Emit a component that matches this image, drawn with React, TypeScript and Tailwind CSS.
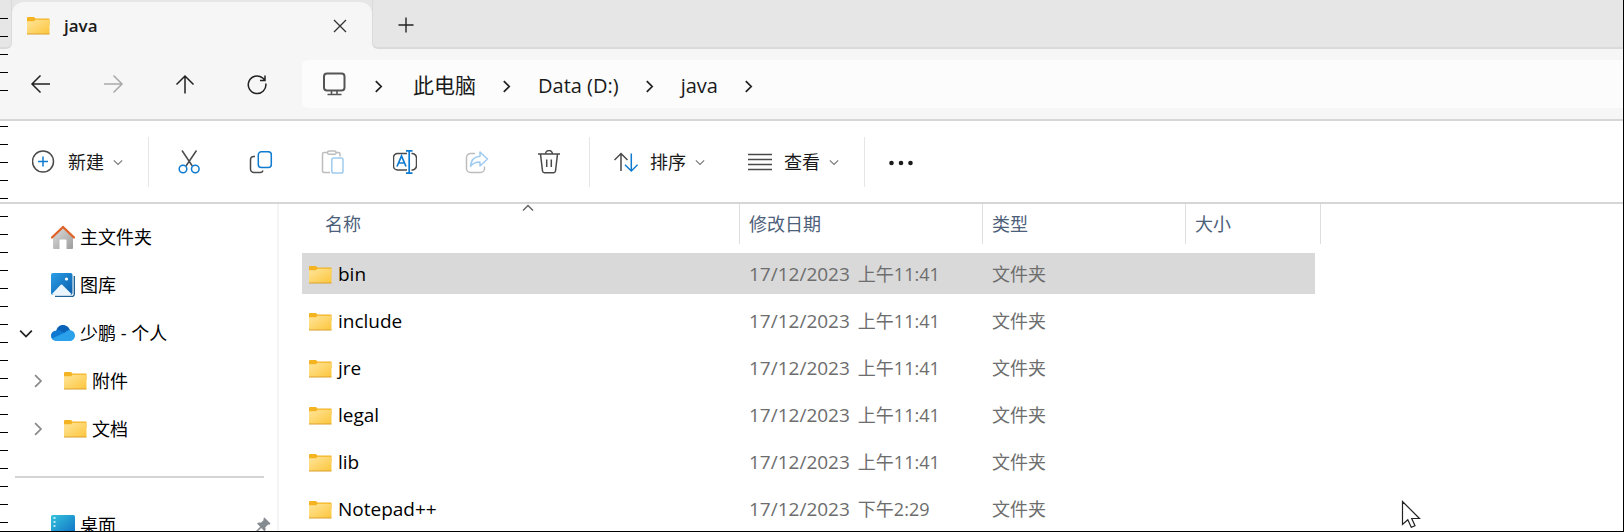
import type { ReactNode } from 'react';

type FileRow = {
  name: string;
  date: string;
  time: string;
  kind: string;
};

const files: FileRow[] = [
  { name: 'bin', date: '17/12/2023', time: '上午11:41', kind: '文件夹' },
  { name: 'include', date: '17/12/2023', time: '上午11:41', kind: '文件夹' },
  { name: 'jre', date: '17/12/2023', time: '上午11:41', kind: '文件夹' },
  { name: 'legal', date: '17/12/2023', time: '上午11:41', kind: '文件夹' },
  { name: 'lib', date: '17/12/2023', time: '上午11:41', kind: '文件夹' },
  { name: 'Notepad++', date: '17/12/2023', time: '下午2:29', kind: '文件夹' },
];

const crumbs = [
  { label: '此电脑', cjk: true },
  { label: 'Data (D:)' },
  { label: 'java' },
];

function FolderIcon() {
  return (
    <svg className="h-[18px] w-6 shrink-0" viewBox="0 0 24 18" aria-hidden="true">
      <defs>
        <linearGradient id="folder" x1="0" y1="0" x2="1" y2="1">
          <stop offset="0" stopColor="#ffe59b" />
          <stop offset="1" stopColor="#fcc63c" />
        </linearGradient>
      </defs>
      <path d="M1 1a1 1 0 0 1 1-1h6l1.500 1.500H23a.5.5 0 0 1 .5.500V8H1z" fill="#f4b320" />
      <path d="M1 4.300h7l1.500-1.500H23.500V17H1z" fill="url(#folder)" />
      <path d="M1 17h22.500" stroke="#dba02c" strokeWidth="1" />
    </svg>
  );
}

function Chevron({ dir, className, stroke = 1.5 }: { dir: 'up' | 'down' | 'right'; className: string; stroke?: number }) {
  const d = { up: 'M1 6.500l5-5 5 5', down: 'M1 4l5 5 5-5', right: 'M3.500 1l5 5-5 5' }[dir];
  return (
    <svg className={className} viewBox="0 0 12 12" fill="none" stroke="currentColor" strokeWidth={stroke} aria-hidden="true">
      <path d={d} />
    </svg>
  );
}

function LineIcon({ children }: { children: ReactNode }) {
  return (
    <svg className="size-6 shrink-0" viewBox="0 0 24 24" fill="none" stroke="#4a4a4a" strokeWidth="1.5" aria-hidden="true">
      {children}
    </svg>
  );
}

function IconButton({ label, disabled = false, children }: { label: string; disabled?: boolean; children: ReactNode }) {
  return (
    <button type="button" aria-label={label} disabled={disabled} className="flex h-12 w-12 items-center justify-center">
      <LineIcon>{children}</LineIcon>
    </button>
  );
}

function MenuButton({ label, icon }: { label: string; icon: ReactNode }) {
  return (
    <button type="button" className="flex h-12 shrink-0 items-center text-[18px] text-[#1a1a1a]">
      <LineIcon>{icon}</LineIcon>
      <span className="ml-3 pt-0.5">{label}</span>
      <Chevron dir="down" className="ml-[9px] size-[10px] text-[#777]" stroke={1.3} />
    </button>
  );
}

function HomeIcon() {
  return (
    <svg className="size-6 shrink-0" viewBox="0 0 24 24" aria-hidden="true">
      <defs>
        <linearGradient id="wall" x1="0" y1="0" x2="1" y2="1">
          <stop offset="0" stopColor="#dedede" />
          <stop offset="1" stopColor="#9d9d9d" />
        </linearGradient>
      </defs>
      <path d="M2 11L12 2l10 9v12a1 1 0 0 1-1 1h-5.500v-8.500a1 1 0 0 0-1-1h-5a1 1 0 0 0-1 1V24H3a1 1 0 0 1-1-1z" fill="url(#wall)" />
      <path d="M1 12.500L12 2l11 10.500" fill="none" stroke="#e0632a" strokeWidth="2.400" strokeLinecap="round" strokeLinejoin="round" />
    </svg>
  );
}

function GalleryIcon() {
  return (
    <svg className="size-6 shrink-0" viewBox="0 0 24 24" aria-hidden="true">
      <defs>
        <linearGradient id="photo" x1="0" y1="0" x2="1" y2="1">
          <stop offset="0" stopColor="#2a9fe6" />
          <stop offset="1" stopColor="#0a5cab" />
        </linearGradient>
      </defs>
      <path d="M23.300 3v18a2.500 2.500 0 0 1-2.500 2.500H4" fill="none" stroke="#1f6394" strokeWidth="1.400" />
      <rect x="0" y="0" width="21.500" height="22" rx="2" fill="url(#photo)" />
      <path d="M1 21l8-8.600a2 2 0 0 1 3 0L20.500 21q-.5 1-2 1H3q-1.500 0-2-1z" fill="#eaf5fd" />
      <circle cx="15.500" cy="6" r="1.600" fill="#fff" />
    </svg>
  );
}

function CloudIcon() {
  return (
    <svg className="size-6 shrink-0" viewBox="0 0 24 24" aria-hidden="true">
      <path d="M5 11C6 5.500 9 4 12 4c3.500 0 6 2.300 7 5.500l-6 6z" fill="#0a63b8" />
      <path d="M5.500 9.500c2-.6 4 0 5.500 1l8 5-13 4C2.500 20 0 17.800 0 14.800c0-2.900 2.300-5.200 5.500-5.300z" fill="#0f78d0" />
      <path d="M14 11.500c1.500-1.700 3-2.300 4.800-2.300 3 0 5.200 2.300 5.200 5.200 0 3-2.300 5.600-5.500 5.600H6c-2 0-4-1-5-2.500z" fill="#2aa1ea" />
    </svg>
  );
}

function DesktopIcon() {
  return (
    <svg className="size-6 shrink-0" viewBox="0 0 24 24" aria-hidden="true">
      <defs>
        <linearGradient id="desk" x1="0" y1="0" x2="1" y2="1">
          <stop offset="0" stopColor="#35c3dc" />
          <stop offset="1" stopColor="#0f6fc4" />
        </linearGradient>
      </defs>
      <rect x="0" y="2" width="24" height="20" rx="1.500" fill="url(#desk)" />
      <path d="M2.500 5h2M2.500 9h2M2.500 13h2" stroke="#e5fbff" strokeWidth="1.600" />
    </svg>
  );
}

function PinIcon() {
  return (
    <svg className="h-4 w-4 shrink-0" viewBox="0 0 16 16" fill="#858b91" aria-hidden="true">
      <path d="M9.500 0.500l6 6-1.200 1.300-1.200-.3-2.800 2.800c.6 1.700.3 3-.8 4l-3.300-3.300L2 15.200.8 15.500 1 14l4.200-4.300L2 6.500c1-1 2.400-1.300 4-.8l2.700-2.800-.4-1.200z" />
    </svg>
  );
}

type NavItemProps = {
  label: string;
  icon: ReactNode;
  state?: 'open' | 'closed';
  nested?: boolean;
  pinned?: boolean;
};

function NavItem({ label, icon, state, nested = false, pinned = false }: NavItemProps) {
  return (
    <li>
      <button type="button" className={`flex h-12 w-full items-center pr-[6px] text-left ${nested ? 'pl-[30px]' : 'pl-[18px]'}`}>
        <span className="flex w-4 justify-center">
          {state === 'open' && <Chevron dir="down" className="size-[14px] text-[#222]" />}
          {state === 'closed' && <Chevron dir="right" className="size-[14px] text-[#888]" />}
        </span>
        <span className="ml-[17px]">{icon}</span>
        <span className="ml-[5px]">{label}</span>
        {pinned && <span className="ml-auto"><PinIcon /></span>}
      </button>
    </li>
  );
}

function TabStrip() {
  return (
    <div className="flex h-[49px] bg-[#f6f6f6]">
      <div className="w-3 rounded-br-md border-r border-b-2 border-[#dadada] bg-[#e6e6e6]" />
      <div className="w-[360px] bg-[#e6e6e6] pt-[2px]">
        <div className="flex h-full items-center rounded-t-xl bg-[#f6f6f6] pr-[22px] pl-[14px]">
          <FolderIcon />
          <span className="ml-[14px] text-[17px] font-semibold text-[#1a1a1a]">java</span>
          <button type="button" aria-label="关闭" className="ml-auto flex size-5 items-center justify-center">
            <svg className="size-[14px]" viewBox="0 0 14 14" stroke="#333" strokeWidth="1.300" aria-hidden="true">
              <path d="M1 1l12 12M13 1L1 13" />
            </svg>
          </button>
        </div>
      </div>
      <div className="flex flex-1 items-center rounded-bl-md border-b-2 border-l border-[#dadada] bg-[#e6e6e6] pt-0.5 pl-[23px]">
        <button type="button" aria-label="新标签页" className="flex size-5 items-center justify-center">
          <svg className="size-4" viewBox="0 0 16 16" stroke="#222" strokeWidth="1.400" aria-hidden="true">
            <path d="M8 0.500v15M0.500 8h15" />
          </svg>
        </button>
      </div>
    </div>
  );
}

function AddressBar() {
  return (
    <div className="flex h-[72px] items-center border-b-2 border-[#d6d6d6] bg-[#f6f6f6] pl-[17px]">
      <div className="flex gap-6">
        <IconButton label="后退">
          <path d="M21 12H3M11.500 3.500L3 12l8.500 8.500" stroke="#222" />
        </IconButton>
        <IconButton label="前进" disabled>
          <path d="M3 12h18M12.500 3.500L21 12l-8.500 8.500" stroke="#a9a9a9" />
        </IconButton>
        <IconButton label="上移">
          <path d="M12 21.500V4M3.500 12.500L12 4l8.500 8.500" stroke="#222" />
        </IconButton>
        <IconButton label="刷新">
          <path d="M20.800 11.500A8.800 8.800 0 1 1 17.500 5.800l2.500 2.400M20 3.500V8.500H15" stroke="#222" />
        </IconButton>
      </div>
      <nav aria-label="地址" className="ml-[21px] flex h-12 flex-1 items-center rounded-l-md bg-[#fcfcfc] pl-5 text-[20px] text-[#1a1a1a]">
        <LineIcon>
          <rect x="2" y="1.500" width="20.500" height="17" rx="3" stroke="#555" strokeWidth="2" />
          <path d="M9.500 19v3M15 19v3M5.500 22.500h14" stroke="#555" strokeWidth="1.600" />
        </LineIcon>
        <div className="ml-[26px] flex items-center gap-[25px] pt-1">
          <Chevron dir="right" className="mr-[3px] size-[13px] shrink-0 text-[#222]" stroke={1.6} />
          {crumbs.map((c) => (
            <span key={c.label} className="flex items-center gap-6">
              <a href="#" className={`whitespace-nowrap ${c.cjk ? 'text-[21px]' : ''}`}>{c.label}</a>
              <Chevron dir="right" className="size-[13px] shrink-0 text-[#222]" stroke={1.6} />
            </span>
          ))}
        </div>
      </nav>
    </div>
  );
}

function CommandBar() {
  return (
    <div className="flex h-[83px] items-center border-b-2 border-[#d6d6d6] bg-white pl-8">
      <MenuButton
        label="新建"
        icon={
          <>
            <circle cx="11" cy="11.500" r="10.500" />
            <path d="M11 6.500v10M6 11.500h10" stroke="#0f7bd0" />
          </>
        }
      />
      <div className="mr-4 ml-[25px] h-[50px] w-px bg-[#e6e6e6]" />
      <div className="flex gap-6">
        <IconButton label="剪切">
          <path d="M5 0.500L15.300 16M19.500 0.500L9 16" />
          <circle cx="6" cy="19" r="3.800" stroke="#0f7bd0" />
          <circle cx="18.300" cy="19" r="3.800" stroke="#0f7bd0" />
        </IconButton>
        <IconButton label="复制">
          <path d="M6 6.500H4.500a3 3 0 0 0-3 3V19a3.500 3.500 0 0 0 3.500 3.500h6a3 3 0 0 0 3-2" />
          <rect x="9.300" y="1.800" width="13" height="15.700" rx="3" stroke="#0f7bd0" />
        </IconButton>
        <IconButton label="粘贴" disabled>
          <path d="M6 2.500H3a1.500 1.500 0 0 0-1.500 1.500v17A1.500 1.500 0 0 0 3 22.500h6M15 2.500h2.500a1.500 1.500 0 0 1 1.500 1.500v2.500" stroke="#bdbdbd" />
          <rect x="6.500" y="1" width="8.500" height="3.300" rx="1.600" stroke="#bdbdbd" />
          <rect x="10.800" y="8" width="11.200" height="15" rx="1.800" stroke="#9fcbf0" />
        </IconButton>
        <IconButton label="重命名">
          <path d="M14 3.500H4.500a4 4 0 0 0-4 4v8.500a4 4 0 0 0 4 4H14M18.500 3.500a4.500 4.500 0 0 1 5 4.500v7.500a4.500 4.500 0 0 1-5 4.500" />
          <path d="M4 16.500L8.500 6l4.500 10.500M5.500 13h6M13 .800h6.500M13 23.200h6.500M16.200 .800v22.400" stroke="#0f7bd0" strokeWidth="1.700" />
        </IconButton>
        <IconButton label="共享" disabled>
          <path d="M10 3.500H5.500a4 4 0 0 0-4 4V18.500a4 4 0 0 0 4 4H15.500a4 4 0 0 0 4-4v-2" stroke="#bdbdbd" />
          <path d="M15 2l7.500 7-7.500 7v-4c-4.500-.2-7 1.200-9.500 4.300C6 10.500 9 6.600 15 6.200z" stroke="#9fcbf0" strokeLinejoin="round" />
        </IconButton>
        <IconButton label="删除">
          <path d="M1 4h22M8.500 4a3.500 3.500 0 0 1 7 0M3.500 4l2 17a2 2 0 0 0 2 1.700h9a2 2 0 0 0 2-1.700l2-17M9.700 9.500v7.500M14.300 9.500v7.500" />
        </IconButton>
      </div>
      <div className="mr-6 ml-4 h-[50px] w-px bg-[#e6e6e6]" />
      <MenuButton
        label="排序"
        icon={
          <>
            <path d="M7 21V3.500M.500 10L7 3.500l6.500 6.500" />
            <path d="M17.300 3.500V21M11 14.700L17.300 21l6.300-6.300" stroke="#0f7bd0" />
          </>
        }
      />
      <div className="ml-[43px] flex items-center">
        <MenuButton label="查看" icon={<path d="M0 4.500h24M0 9.500h24M0 14.500h24M0 19.500h24" />} />
      </div>
      <div className="mr-3 ml-[25px] h-[50px] w-px bg-[#e6e6e6]" />
      <IconButton label="更多">
        <g fill="#1a1a1a" stroke="none">
          <circle cx="2.500" cy="13" r="2.300" />
          <circle cx="12" cy="13" r="2.300" />
          <circle cx="21.500" cy="13" r="2.300" />
        </g>
      </IconButton>
    </div>
  );
}

function Sidebar() {
  return (
    <aside className="w-[279px] shrink-0 border-r-2 border-[#f4f4f4] pt-[9px] text-[18px] text-black">
      <ul>
        <NavItem label="主文件夹" icon={<HomeIcon />} />
        <NavItem label="图库" icon={<GalleryIcon />} />
        <NavItem label="少鹏 - 个人" icon={<CloudIcon />} state="open" />
        <NavItem label="附件" icon={<FolderIcon />} state="closed" nested />
        <NavItem label="文档" icon={<FolderIcon />} state="closed" nested />
      </ul>
      <hr className="mt-[23px] mr-[13px] mb-[23px] ml-[15px] border-t-2 border-[#d4d4d4]" />
      <ul>
        <NavItem label="桌面" icon={<DesktopIcon />} pinned />
      </ul>
    </aside>
  );
}

function HeaderCell({ label, sorted = false }: { label: string; sorted?: boolean }) {
  return (
    <th className="p-0 pb-[6px] text-left font-normal" aria-sort={sorted ? 'ascending' : undefined}>
      <div className={`relative flex h-10 items-center border-r border-[#dedede] ${sorted ? 'ml-[14px] pl-[9px]' : 'pl-[9px]'}`}>
        {sorted && <Chevron dir="up" className="absolute inset-x-0 top-0 mx-auto size-3 text-[#666]" />}
        {label}
      </div>
    </th>
  );
}

function FileTable() {
  return (
    <table className="w-[1019px] table-fixed border-separate border-spacing-0 text-[18px]">
      <colgroup>
        <col className="w-[438px]" />
        <col className="w-[243px]" />
        <col className="w-[203px]" />
        <col className="w-[135px]" />
      </colgroup>
      <thead className="text-[#4c607a]">
        <tr>
          <HeaderCell label="名称" sorted />
          <HeaderCell label="修改日期" />
          <HeaderCell label="类型" />
          <HeaderCell label="大小" />
        </tr>
      </thead>
      <tbody className="text-[#6d6d6d]">
        {files.map((f) => (
          <tr key={f.name} className="[&>td]:h-[47px] [&>td]:border-y-[3px] [&>td]:border-transparent [&>td]:bg-clip-padding [&>td]:p-0 [&>td]:pt-0.5 first:[&>td]:bg-[#d9d9d9]">
            <td>
              <div className="flex items-center gap-[6px] pl-[6px] text-[19px] text-black">
                <FolderIcon />
                {f.name}
              </div>
            </td>
            <td>
              <div className="flex items-baseline gap-2 pl-[9px] whitespace-nowrap">
                <span className="text-[19px]">{f.date}</span>
                <span>{f.time}</span>
              </div>
            </td>
            <td>
              <div className="pl-[9px]">{f.kind}</div>
            </td>
            <td className="border-r-[6px]" />
          </tr>
        ))}
      </tbody>
    </table>
  );
}

// ruler marks down the left edge of the window
function EdgeMarks() {
  return (
    <div className="pointer-events-none absolute inset-y-0 left-0 w-2 overflow-hidden pt-px" aria-hidden="true">
      {Array.from({ length: 29 }, (_, i) => (
        <div key={i} className={`h-[18px] border-b ${i === 5 ? 'border-transparent' : 'border-black'}`} />
      ))}
    </div>
  );
}

export default function App() {
  return (
    <div className="relative flex h-screen flex-col overflow-hidden border-r border-b border-black bg-white font-['Open_Sans','Noto_Sans_CJK_SC',sans-serif]">
      <TabStrip />
      <AddressBar />
      <CommandBar />
      <div className="flex min-h-0 flex-1 overflow-hidden">
        <Sidebar />
        <main className="min-w-0 flex-1 overflow-hidden pl-[23px]">
          <FileTable />
        </main>
      </div>
      <EdgeMarks />
      <svg className="pointer-events-none absolute top-[500px] left-[1401px] h-7 w-5" viewBox="0 0 20 28" aria-hidden="true">
        <path d="M1.500 1.500v23l5.300-4.700 3.500 7.500 3.700-1.500-3.300-7.300h7.800z" fill="#fff" stroke="#222" strokeWidth="1.200" />
      </svg>
    </div>
  );
}
